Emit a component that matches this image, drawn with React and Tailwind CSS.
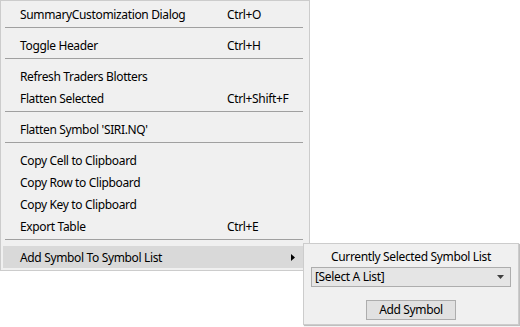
import React from "react";

const items = [
  { label: "SummaryCustomization Dialog", shortcut: "Ctrl+O" },
  { sep: true },
  { label: "Toggle Header", shortcut: "Ctrl+H" },
  { sep: true },
  { label: "Refresh Traders Blotters" },
  { label: "Flatten Selected", shortcut: "Ctrl+Shift+F" },
  { sep: true },
  { label: "Flatten Symbol 'SIRI.NQ'" },
  { sep: true },
  { label: "Copy Cell to Clipboard" },
  { label: "Copy Row to Clipboard" },
  { label: "Copy Key to Clipboard" },
  { label: "Export Table", shortcut: "Ctrl+E" },
  { sep: true },
  { label: "Add Symbol To Symbol List", submenu: true, active: true },
];

const font = { fontFamily: '"Noto Sans", "Open Sans", sans-serif' };

const MenuItem = ({ item }) => {
  if (item.sep) {
    return (
      <div className="h-[9px] pt-[2px] pl-[2px]">
        <div className="h-px bg-[#a0a0a0]" />
      </div>
    );
  }
  return (
    <div
      className={`flex items-center h-[22px] pl-[17px] pt-px ${
        item.active ? "bg-[#d9d9d9]" : ""
      }`}
    >
      <span className="w-[207px] whitespace-nowrap">{item.label}</span>
      {item.shortcut && <span className="whitespace-nowrap">{item.shortcut}</span>}
      {item.submenu && (
        <svg width="4" height="7" viewBox="0 0 4 7" className="ml-auto mr-[8px]">
          <polygon points="0,0 4,3.5 0,7" fill="#000" />
        </svg>
      )}
    </div>
  );
};

export default function App() {
  return (
    <div
      className="relative w-[520px] h-[327px] bg-white text-[12px] tracking-[-0.35px] text-black overflow-hidden"
      style={font}
    >
      {/* main context menu */}
      <div className="w-[310px] h-[271px] bg-[#f0f0f0] border border-[#cccccc] pt-[2px] pl-[2px] pr-[6px]">
        {items.map((item, i) => (
          <MenuItem key={i} item={item} />
        ))}
      </div>

      {/* submenu panel */}
      <div className="absolute left-[303px] top-[243px] w-[216px] h-[82px] bg-[#f0f0f0] border border-[#cccccc] shadow-[1px_1px_1px_rgba(0,0,0,0.25)] flex flex-col items-center">
        <div className="mt-[3px] h-[18px] leading-[18px] pt-px">Currently Selected Symbol List</div>
        <div className="mt-[2px] w-[200px] h-[20px] bg-[#e5e5e5] border border-[#adadad] flex items-center pl-[3px] pr-[6px]">
          <span className="flex-1 leading-none">[Select A List]</span>
          <svg width="7" height="4" viewBox="0 0 7 4">
            <polygon points="0,0 7,0 3.5,4" fill="#404040" />
          </svg>
        </div>
        <button className="mt-[13px] w-[90px] h-[20px] bg-[#e1e1e1] border border-[#adadad] flex items-center justify-center leading-none">
          Add Symbol
        </button>
      </div>
    </div>
  );
}
